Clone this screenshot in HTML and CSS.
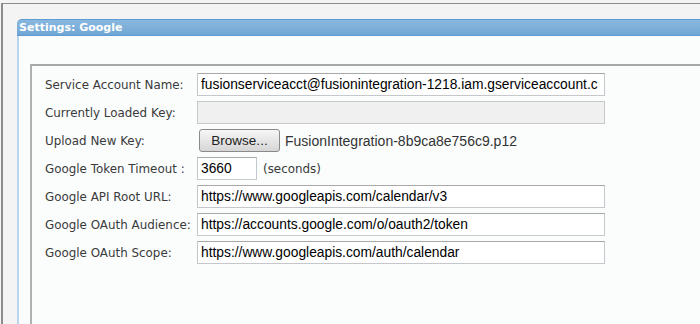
FILE: index.html
```html
<!DOCTYPE html>
<html>
<head>
<meta charset="utf-8">
<link rel="stylesheet" href="styles.css">
</head>
<body>
<div class="frame">
  <div class="dialog">
    <div class="titlebar">Settings: Google</div>
    <div class="dialog-body">
      <div class="panel">
        <div class="row">
          <span class="label">Service Account Name:</span>
          <div class="input wide">fusionserviceacct@fusionintegration-1218.iam.gserviceaccount.c</div>
        </div>
        <div class="row">
          <span class="label">Currently Loaded Key:</span>
          <div class="input wide disabled"></div>
        </div>
        <div class="row">
          <span class="label">Upload New Key:</span>
          <button class="browse">Browse...</button>
          <span class="filename">FusionIntegration-8b9ca8e756c9.p12</span>
        </div>
        <div class="row">
          <span class="label">Google Token Timeout :</span>
          <div class="input short">3660</div>
          <span class="unit">(seconds)</span>
        </div>
        <div class="row">
          <span class="label">Google API Root URL:</span>
          <div class="input wide">https://www.googleapis.com/calendar/v3</div>
        </div>
        <div class="row">
          <span class="label">Google OAuth Audience:</span>
          <div class="input wide">https://accounts.google.com/o/oauth2/token</div>
        </div>
        <div class="row">
          <span class="label">Google OAuth Scope:</span>
          <div class="input wide">https://www.googleapis.com/auth/calendar</div>
        </div>
      </div>
    </div>
  </div>
</div>
</body>
</html>
```
FILE: styles.css
```css
html, body {
  margin: 0;
  padding: 0;
  background: #f4f4f4;
  height: 100%;
  overflow: hidden;
}
* { box-sizing: border-box; }
.frame {
  margin: 3px 0 0 1px;
  border-top: 1px solid #8c8c8c;
  border-left: 2px solid #8c8c8c;
  height: calc(100% - 3px);
  padding: 15px 0 0 14px;
}
.dialog {
  height: 100%;
  display: flex;
  flex-direction: column;
}
.titlebar {
  flex: none;
  height: 17px;
  background: linear-gradient(to bottom, #88b8e0 0%, #7eb0da 50%, #6fa6d4 100%);
  border-top: 1px solid #5d9bd0;
  border-bottom: 1px solid #5d9bd0;
  border-top-left-radius: 5px;
  color: #ffffff;
  font-family: "DejaVu Sans", Verdana, sans-serif;
  font-weight: bold;
  font-size: 11px;
  line-height: 15px;
  padding-left: 2px;
}
.dialog-body {
  flex: 1;
  background: #fbfdfd;
  border-left: 2px solid #b9d6ee;
  padding: 28px 0 0 11px;
  display: flex;
}
.panel {
  flex: 1;
  border-top: 2px solid #a8a8a8;
  border-left: 2px solid #b0b0b0;
  padding: 7px 0 0 13px;
  display: flex;
  flex-direction: column;
  gap: 5px;
}
.row {
  display: flex;
  align-items: center;
  height: 23px;
}
.label {
  width: 152px;
  flex: none;
  font-family: "DejaVu Sans", Verdana, sans-serif;
  font-size: 11.9px;
  color: #3a3a3a;
  white-space: nowrap;
}
.input {
  height: 23px;
  border: 1px solid #c4c8cc;
  border-top-color: #a9a9a9;
  background: #ffffff;
  font-family: "Liberation Sans", Arial, sans-serif;
  font-size: 13.8px;
  line-height: 21px;
  color: #000;
  padding-left: 3px;
  white-space: nowrap;
  overflow: hidden;
}
.wide { width: 408px; }
.short { width: 60px; }
.disabled { background: #f0f0f0; border-color: #c8c8c8; }
.browse {
  margin-left: 2px;
  width: 81px;
  height: 23px;
  border: 1px solid #8a8a8a;
  border-radius: 3px;
  background: linear-gradient(to bottom, #f6f6f6 0%, #e6e6e6 50%, #d6d6d6 100%);
  font-family: "Liberation Sans", Arial, sans-serif;
  font-size: 13.5px;
  color: #222;
  padding: 0;
}
.filename {
  margin-left: 5px;
  font-family: "Liberation Sans", Arial, sans-serif;
  font-size: 14px;
  color: #333;
}
.unit {
  margin-left: 6px;
  font-family: "DejaVu Sans", Verdana, sans-serif;
  font-size: 11.9px;
  color: #3a3a3a;
}
```
